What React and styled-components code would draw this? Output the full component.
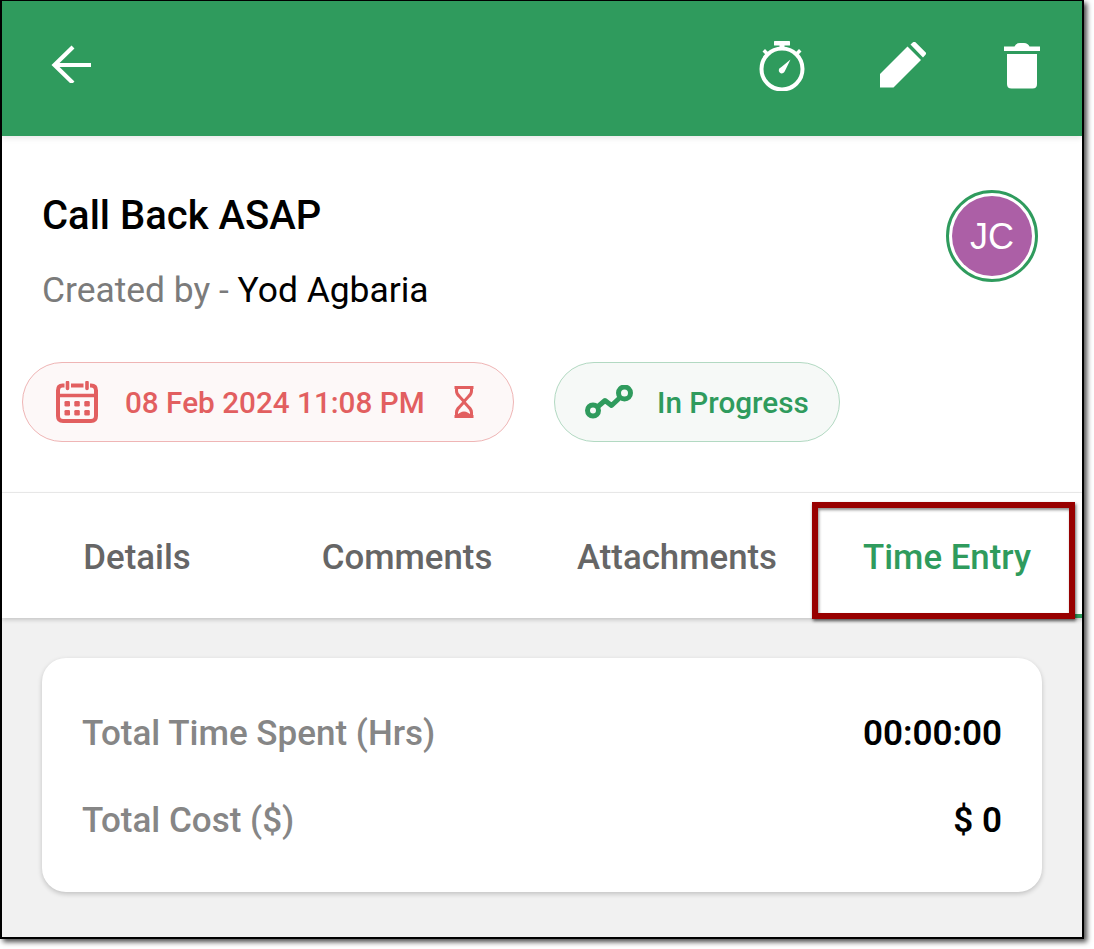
import React from "react";
import styled, { createGlobalStyle } from "styled-components";

const Global = createGlobalStyle`
  html, body { margin: 0; padding: 0; background: #fff; }
  body { font-family: Roboto, "Liberation Sans", sans-serif; width: 1094px; height: 949px; overflow: hidden; }
  * { box-sizing: border-box; }
`;

const Frame = styled.div`
  position: relative;
  width: 1084px;
  height: 939px;
  border: 2px solid #000;
  border-width: 1px 2px 2px 2px;
  background: #f1f1f1;
  box-shadow: 3px 3px 5px rgba(0, 0, 0, 0.7);
  display: flex;
  flex-direction: column;
`;

const Header = styled.header`
  height: 135px;
  flex: none;
  background: #2f9b5d;
  display: flex;
  align-items: flex-start;
  justify-content: space-between;
  padding: 40px 42px 0 47px;
  box-shadow: 0 2px 6px rgba(0, 0, 0, 0.1);
  position: relative;
`;

const HeaderActions = styled.div`
  display: flex;
  align-items: flex-start;
`;

const IconSlot = styled.span`
  display: block;
  width: ${(p) => p.$w}px;
  margin-left: ${(p) => p.$ml || 0}px;
  margin-top: ${(p) => p.$mt || 0}px;
  line-height: 0;
`;

const Summary = styled.section`
  background: #fff;
  height: 357px;
  flex: none;
  padding: 54px 44px 0 20px;
  border-bottom: 1px solid #ececec;
`;

const SummaryTop = styled.div`
  display: flex;
  justify-content: space-between;
  align-items: flex-start;
  padding-left: 20px;
`;

const Title = styled.h1`
  margin: 2px 0 0;
  font-size: 40px;
  line-height: 48px;
  font-weight: 500;
  color: #000;
`;

const Creator = styled.p`
  margin: 30px 0 0;
  font-size: 35.4px;
  line-height: 40px;
  color: #7b7b7b;
  & > span { color: #000; }
`;

const Avatar = styled.div`
  width: 92px;
  height: 92px;
  border-radius: 50%;
  border: 3px solid #2f9b5d;
  padding: 3px;
  background: #fff;
  flex: none;
`;

const AvatarFill = styled.div`
  width: 100%;
  height: 100%;
  padding-top: 2px;
  border-radius: 50%;
  background: #ac5fa6;
  color: #fff;
  font-family: "Liberation Sans", Arial, sans-serif;
  font-size: 36px;
  display: flex;
  align-items: center;
  justify-content: center;
`;

const Chips = styled.div`
  display: flex;
  gap: 40px;
  margin-top: 52px;
`;

const Chip = styled.div`
  height: 80px;
  width: ${(p) => p.$w}px;
  border-radius: 40px;
  display: flex;
  align-items: center;
  border: 1px solid ${(p) => p.$border};
  background: ${(p) => p.$bg};
  color: ${(p) => p.$fg};
  font-size: 29.7px;
  font-weight: 500;
  padding-left: ${(p) => p.$pl}px;
`;

const ChipLabel = styled.span`
  margin: 0 ${(p) => p.$mr || 0}px 0 ${(p) => p.$ml}px;
  white-space: nowrap;
`;

const Tabs = styled.nav`
  display: grid;
  grid-template-columns: repeat(4, 1fr);
  height: 125px;
  flex: none;
  background: #fff;
  box-shadow: 0 2px 4px rgba(0, 0, 0, 0.18);
  position: relative;
`;

const Tab = styled.div`
  display: flex;
  align-items: center;
  justify-content: center;
  padding-top: 3px;
  font-size: 34.8px;
  font-weight: 500;
  color: ${(p) => (p.$active ? "#2f9b5d" : "#666")};
  ${(p) => p.$active && "box-shadow: inset 0 -4px 0 #2f9b5d;"}
`;

const Highlight = styled.div`
  position: absolute;
  left: 810px;
  top: 501px;
  width: 263px;
  height: 117px;
  border: 6px solid #980000;
  box-shadow: 1px 2px 3px rgba(0, 0, 0, 0.6), inset 1px 2px 3px rgba(0, 0, 0, 0.45);
`;

const Content = styled.main`
  flex: 1;
  padding: 40px 40px 0;
`;

const Card = styled.div`
  width: 1000px;
  height: 234px;
  background: #fff;
  border-radius: 24px;
  box-shadow: 0 2px 5px rgba(0, 0, 0, 0.2);
  padding: 55px 40px 0;
  display: flex;
  flex-direction: column;
  gap: 47px;
`;

const Row = styled.div`
  display: flex;
  justify-content: space-between;
  align-items: center;
  height: 40px;
`;

const RowLabel = styled.span`
  font-size: 35px;
  font-weight: 500;
  color: #868686;
`;

const RowValue = styled.span`
  font-size: 35px;
  font-weight: 600;
  color: #000;
`;

const BackIcon = () => (
  <svg width="42" height="42" viewBox="0 0 42 42" fill="none" stroke="#fff" strokeWidth="4.2">
    <path d="M42 24H6" />
    <path d="M24 6 5.500 24 24 42" />
  </svg>
);

const TimerIcon = () => (
  <svg width="50" height="50" viewBox="0 0 50 50" fill="#fff">
    <circle cx="25" cy="28" r="20.500" fill="none" stroke="#fff" strokeWidth="4" />
    <rect x="17" y="0" width="16" height="4.500" rx="0.600" />
    <rect x="22.500" y="3" width="5" height="5" />
    <path d="M5.500 10.500 8 8l3.500 3.500L9 14zM44.500 10.500 42 8l-3.500 3.500L41 14z" />
    <path d="M33.500 18.500 27.800 30.300a3.100 3.100 0 1 1-4-3.900z" />
  </svg>
);

const EditIcon = () => (
  <svg width="46" height="46" viewBox="0 0 46 46" fill="#fff">
    <path d="M0 32 27.500 4.500 41 18 13.500 45.500H0z" />
    <path d="M30.500 2.500 33 0.300a1.800 1.800 0 0 1 2.500 0l10 10a1.800 1.800 0 0 1 0 2.500L43 15.500z" />
  </svg>
);

const TrashIcon = () => (
  <svg width="36" height="46" viewBox="0 0 36 46" fill="#fff">
    <path d="M0 3.500h10.500Q12 0 16 0h4q4 0 5.500 3.500H36V8H0z" />
    <path d="M3 11h30v30q0 4.500-4.500 4.500h-21Q3 45.500 3 41z" />
  </svg>
);

const CalendarIcon = () => (
  <svg width="42" height="42" viewBox="0 0 42 42" fill="none" stroke="#e25f60" strokeWidth="4">
    <path d="M8.500 4.500H6.500Q2 4.500 2 9.500V35q0 5 5 5h28q5 0 5-5V9.500q0-5-5-5H34" />
    <path d="M15 4.500h12.500" />
    <path d="M11.500 1.500v6M31 1.500v6" strokeWidth="3.600" strokeLinecap="round" />
    <path d="M2 14.500h38" strokeWidth="3.600" />
    <g fill="#e25f60" stroke="none">
      <rect x="8.500" y="20" width="5.500" height="5.500" rx="1.300" />
      <rect x="18.300" y="20" width="5.500" height="5.500" rx="1.300" />
      <rect x="28.300" y="20" width="5.500" height="5.500" rx="1.300" />
      <rect x="8.500" y="29" width="5.500" height="5.500" rx="1.300" />
      <rect x="18.300" y="29" width="5.500" height="5.500" rx="1.300" />
      <rect x="28.300" y="29" width="5.500" height="5.500" rx="1.300" />
    </g>
  </svg>
);

const HourglassIcon = () => (
  <svg width="22" height="32" viewBox="0 0 22 32" fill="none" stroke="#e25f60" strokeWidth="3">
    <path d="M1.500 1.500h19M1.500 30.500h19" />
    <path d="M3.500 1.500v3.500q0 3 3 5.500l4.500 5 4.500-5q3-2.500 3-5.500V1.500" />
    <path d="M3.500 30v-3.500q0-3 3-5.500l4.500-5 4.500 5q3 2.500 3 5.500V30" />
    <path d="M3 30q8-9 16 0z" fill="#e25f60" stroke="none" />
  </svg>
);

const RouteIcon = () => (
  <svg width="48" height="34" viewBox="0 0 48 34" fill="none" stroke="#2f9b5d" strokeWidth="5">
    <circle cx="8" cy="25.500" r="5.500" />
    <circle cx="39.500" cy="8" r="6" />
    <path d="M13 21.500 20 15.500 26.500 20.500 33.500 14" strokeLinecap="round" strokeLinejoin="round" />
  </svg>
);

export default function App() {
  return (
    <>
      <Global />
      <Frame>
        <Header>
          <IconSlot $w={42}><BackIcon /></IconSlot>
          <HeaderActions>
            <IconSlot $w={50}><TimerIcon /></IconSlot>
            <IconSlot $w={46} $ml={73} $mt={1}><EditIcon /></IconSlot>
            <IconSlot $w={36} $ml={78} $mt={2}><TrashIcon /></IconSlot>
          </HeaderActions>
        </Header>
        <Summary>
          <SummaryTop>
            <div>
              <Title>Call Back ASAP</Title>
              <Creator>Created by - <span>Yod Agbaria</span></Creator>
            </div>
            <Avatar><AvatarFill>JC</AvatarFill></Avatar>
          </SummaryTop>
          <Chips>
            <Chip $w={492} $pl={33} $border="#efb5b5" $bg="#fdf8f8" $fg="#e25f60">
              <CalendarIcon />
              <ChipLabel $ml={27} $mr={28}>08 Feb 2024 11:08 PM</ChipLabel>
              <HourglassIcon />
            </Chip>
            <Chip $w={286} $pl={30} $border="#b2d9c2" $bg="#f6f9f7" $fg="#2f9b5d">
              <RouteIcon />
              <ChipLabel $ml={24}>In Progress</ChipLabel>
            </Chip>
          </Chips>
        </Summary>
        <Tabs>
          <Tab>Details</Tab>
          <Tab>Comments</Tab>
          <Tab>Attachments</Tab>
          <Tab $active>Time Entry</Tab>
        </Tabs>
        <Content>
          <Card>
            <Row>
              <RowLabel>Total Time Spent (Hrs)</RowLabel>
              <RowValue>00:00:00</RowValue>
            </Row>
            <Row>
              <RowLabel>Total Cost ($)</RowLabel>
              <RowValue>$ 0</RowValue>
            </Row>
          </Card>
        </Content>
        <Highlight />
      </Frame>
    </>
  );
}
